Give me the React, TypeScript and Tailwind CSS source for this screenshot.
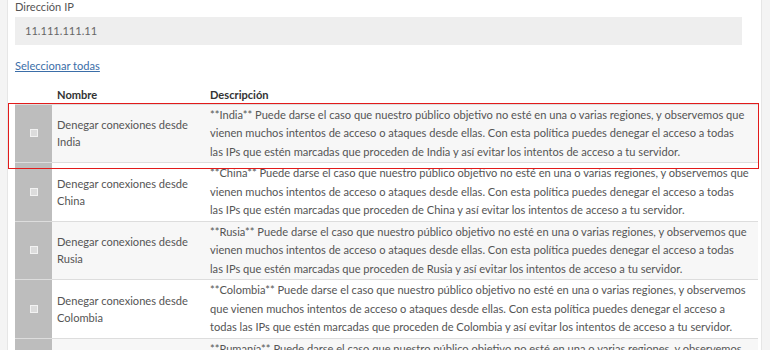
// Line breaks follow the original page's wrapping
const regions = [
  { name: 'India', long: false },
  { name: 'China', long: false },
  { name: 'Rusia', long: false },
  { name: 'Colombia', long: true },
  { name: 'Rumanía', long: true },
];

function descLines(name: string, long: boolean) {
  if (long) {
    return [
      `**${name}** Puede darse el caso que nuestro público objetivo no esté en una o varias regiones, y observemos`,
      'que vienen muchos intentos de acceso o ataques desde ellas. Con esta política puedes denegar el acceso a',
      `todas las IPs que estén marcadas que proceden de ${name} y así evitar los intentos de acceso a tu servidor.`,
    ];
  }
  return [
    `**${name}** Puede darse el caso que nuestro público objetivo no esté en una o varias regiones, y observemos que`,
    'vienen muchos intentos de acceso o ataques desde ellas. Con esta política puedes denegar el acceso a todas',
    `las IPs que estén marcadas que proceden de ${name} y así evitar los intentos de acceso a tu servidor.`,
  ];
}

function App() {
  return (
    <div
      className="h-[350px] w-[770px] overflow-hidden bg-[#f4f4f4] text-[11.1px] text-[#555]"
      style={{ fontFamily: 'Lato, "Open Sans", sans-serif' }}
    >
      <div className="ml-[7px] mr-[8px] h-full border-x border-[#e6e6e6] bg-white pl-[7px] pr-[3px]">
        {/* IP field */}
        <div className="leading-[14px]">Dirección IP</div>
        <div className="mt-[3px] mr-[16px] flex h-[28px] items-center bg-[#eeeeee] pl-[10px] text-[#666]">
          11.111.111.11
        </div>

        <div className="mt-[14px] leading-[14px]">
          <a href="#" className="text-[#3b6ea8] underline">
            Seleccionar todas
          </a>
        </div>

        {/* Table */}
        <div className="relative mt-[15px]">
          <table className="w-full border-collapse">
            <thead>
              <tr className="h-[16px] text-left text-[#333]">
                <th className="w-[37px]"></th>
                <th className="w-[153px] pl-[5px] align-top font-bold leading-[14px]">Nombre</th>
                <th className="pl-[5px] align-top font-bold leading-[14px]">Descripción</th>
              </tr>
            </thead>
            <tbody>
              {regions.map((r, i) => (
                <tr
                  key={r.name}
                  className={`border-t border-[#dddddd] ${i % 2 === 0 ? 'bg-[#f7f7f7]' : 'bg-white'}`}
                >
                  <td className="bg-[#bdbdbd] align-middle">
                    <div className="mx-auto h-[8px] w-[8px] border border-[#f2f2f2] bg-[#dcdcdc]"></div>
                  </td>
                  <td className="pl-[5px] pr-[4px] align-middle leading-[17px]">
                    Denegar conexiones desde
                    <br />
                    {r.name}
                  </td>
                  <td className="py-[1px] pl-[5px] pr-[5px] align-middle leading-[18.5px] whitespace-nowrap">
                    {descLines(r.name, r.long).map((line) => (
                      <div key={line}>{line}</div>
                    ))}
                  </td>
                </tr>
              ))}
            </tbody>
          </table>
          {/* red highlight annotation */}
          <div className="pointer-events-none absolute top-[15px] -left-[7px] -right-[1px] h-[66px] border border-[#e21b1b]"></div>
        </div>
      </div>
    </div>
  );
}

export default App;
